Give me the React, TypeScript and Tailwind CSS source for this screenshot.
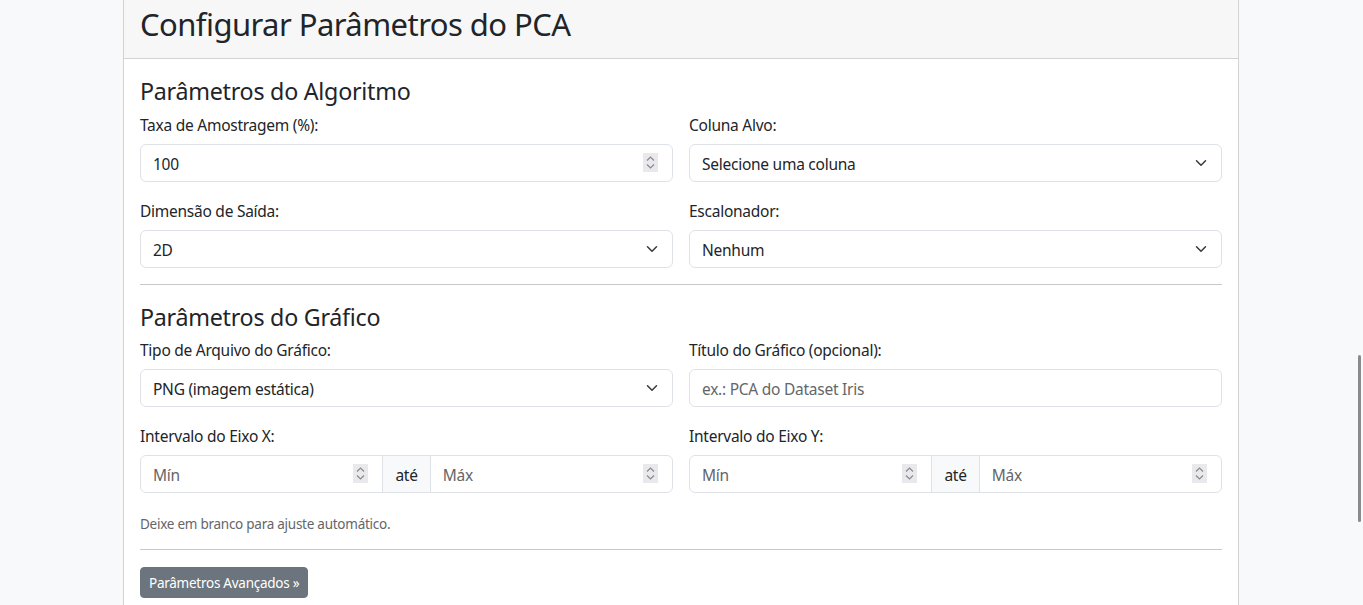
import { ReactNode } from "react"

function Chevron() {
  return (
    <svg width="16" height="12" viewBox="0 0 16 16" fill="none" className="shrink-0">
      <path d="m2 5 6 6 6-6" stroke="#343a40" strokeWidth="2" strokeLinecap="round" strokeLinejoin="round" />
    </svg>
  )
}

function Spinner() {
  return (
    <div className="w-[15px] h-[19px] bg-[#e9e9ed] flex flex-col items-center justify-center gap-[3px] shrink-0 mr-[2px]">
      <svg width="9" height="5" viewBox="0 0 9 5" fill="none">
        <path d="M1 4.5 4.5 1 8 4.5" stroke="#8a8a8a" strokeWidth="1.2" />
      </svg>
      <svg width="9" height="5" viewBox="0 0 9 5" fill="none">
        <path d="M1 .5 4.5 4 8 .5" stroke="#8a8a8a" strokeWidth="1.2" />
      </svg>
    </div>
  )
}

function Label({ children }: { children: ReactNode }) {
  return <div className="text-[15.5px] leading-6 pt-[1px] mb-[7px] text-[#212529]">{children}</div>
}

function SelectBox({ value }: { value: string }) {
  return (
    <div className="h-[38px] border border-[#dee2e6] rounded-[6px] bg-white pl-3 pr-3 flex items-center justify-between">
      <span className="text-[15.5px] text-[#212529] pt-[3px]">{value}</span>
      <Chevron />
    </div>
  )
}

function NumberBox({ value }: { value: string }) {
  return (
    <div className="h-[38px] border border-[#dee2e6] rounded-[6px] bg-white px-3 flex items-center justify-between">
      <span className="text-[15.5px] text-[#212529] pt-[3px]">{value}</span>
      <Spinner />
    </div>
  )
}

function RangeGroup() {
  return (
    <div className="flex h-[38px]">
      <div className="flex-1 border border-[#dee2e6] rounded-l-[6px] bg-white px-3 flex items-center justify-between">
        <span className="text-[15.5px] text-[#646669] pt-[3px]">Mín</span>
        <Spinner />
      </div>
      <div className="-ml-px border border-[#dee2e6] bg-[#f8f9fa] px-3 pt-[3px] flex items-center text-[15.5px] text-[#212529]">
        até
      </div>
      <div className="-ml-px flex-1 border border-[#dee2e6] rounded-r-[6px] bg-white px-3 flex items-center justify-between">
        <span className="text-[15.5px] text-[#646669] pt-[3px]">Máx</span>
        <Spinner />
      </div>
    </div>
  )
}

export default function App() {
  return (
    <div className="h-[605px] overflow-hidden bg-[#f8f9fa] font-['Noto_Sans',sans-serif] tracking-[-0.016em] text-[#212529] relative">
      <div className="ml-[123px] w-[1116px] border-x border-[#d3d3d4] bg-white min-h-[620px]">
        <div className="h-[59px] bg-[#f7f7f7] border-b border-[#d3d3d4] px-4 pt-[5px]">
          <h2 className="text-[31px] leading-[38.4px] font-normal tracking-[-0.018em]">Configurar Parâmetros do PCA</h2>
        </div>

        <div className="px-4 pt-4">
          <h4 className="text-[23.25px] leading-[28.8px] font-normal pt-[2px] mb-[6px]">Parâmetros do Algoritmo</h4>

          <div className="grid grid-cols-2 gap-x-4">
            <div className="mb-4">
              <Label>Taxa de Amostragem (%):</Label>
              <NumberBox value="100" />
            </div>
            <div className="mb-4">
              <Label>Coluna Alvo:</Label>
              <SelectBox value="Selecione uma coluna" />
            </div>
            <div className="mb-4">
              <Label>Dimensão de Saída:</Label>
              <SelectBox value="2D" />
            </div>
            <div className="mb-4">
              <Label>Escalonador:</Label>
              <SelectBox value="Nenhum" />
            </div>
          </div>

          <hr className="border-t border-[#c8c9ca] mb-4" />

          <h4 className="text-[23.25px] leading-[28px] font-normal pt-[2px] mb-[6px]">Parâmetros do Gráfico</h4>

          <div className="grid grid-cols-2 gap-x-4">
            <div className="mb-4">
              <Label>Tipo de Arquivo do Gráfico:</Label>
              <SelectBox value="PNG (imagem estática)" />
            </div>
            <div className="mb-4">
              <Label>Título do Gráfico (opcional):</Label>
              <div className="h-[38px] border border-[#dee2e6] rounded-[6px] bg-white px-3 flex items-center">
                <span className="text-[15.5px] text-[#646669] pt-[3px]">ex.: PCA do Dataset Iris</span>
              </div>
            </div>
            <div className="mb-4">
              <Label>Intervalo do Eixo X:</Label>
              <RangeGroup />
            </div>
            <div className="mb-4">
              <Label>Intervalo do Eixo Y:</Label>
              <RangeGroup />
            </div>
          </div>

          <div className="mt-1 pt-[1px] h-[20px] text-[13.5px] leading-[20px] text-[#646669]">Deixe em branco para ajuste automático.</div>

          <hr className="border-t border-[#c8c9ca] mt-4 mb-[17px]" />

          <button className="bg-[#6c757d] text-white text-[13.5px] leading-[21px] px-2 pt-[5px] pb-[3px] rounded-[4px] border border-[#6c757d]">
            Parâmetros Avançados »
          </button>
        </div>
      </div>

      <div className="absolute right-[2px] top-[355px] h-[167px] w-[3px] rounded-full bg-[#8b8b8b]" />
    </div>
  )
}
